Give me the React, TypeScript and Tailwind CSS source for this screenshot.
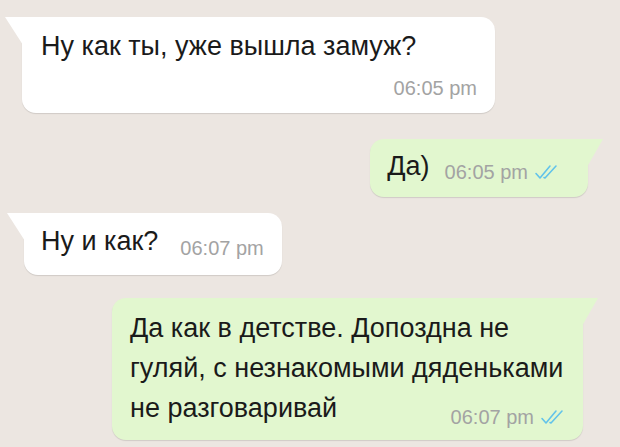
import React from 'react';

const Ticks = () => (
  <svg width="26" height="16" viewBox="0 0 26 16" fill="none" className="inline-block">
    <path d="M2 9.5 L6 14 L16 2" stroke="#62c3ea" strokeWidth="1.6" strokeLinecap="round" strokeLinejoin="round" />
    <path d="M10 13.5 L11 14 L22 2" stroke="#62c3ea" strokeWidth="1.6" strokeLinecap="round" strokeLinejoin="round" />
  </svg>
);

const InTail = () => (
  <svg width="18" height="28" viewBox="0 0 18 28" className="absolute -left-[17px] top-0">
    <path d="M0 0 L18 0 L18 28 Z" fill="#ffffff" />
  </svg>
);

const OutTail = () => (
  <svg width="16" height="28" viewBox="0 0 16 28" className="absolute -right-[15px] top-0">
    <path d="M16 0 L0 0 L0 28 Z" fill="#e2f7cf" />
  </svg>
);

const Time = ({ children }: { children: React.ReactNode }) => (
  <span className="text-[20px] leading-none text-[#a3a3a3]">{children}</span>
);

export default function App() {
  return (
    <div
      className="w-[620px] h-[447px] overflow-hidden bg-[#ece6e1] flex flex-col text-[#1a1a1a]"
      style={{ fontFamily: '"Liberation Sans", Arial, sans-serif' }}
    >
      {/* incoming 1 */}
      <div className="relative ml-[22px] mt-[17px] w-[473px] h-[96px] bg-white rounded-[14px] rounded-tl-none shadow-[0_1px_1px_rgba(0,0,0,0.12)] pl-[19px] pr-[18px] pt-[13px]">
        <InTail />
        <div className="text-[27px] leading-[32px]">Ну как ты, уже вышла замуж?</div>
        <div className="flex justify-end mt-[16px]">
          <Time>06:05 pm</Time>
        </div>
      </div>

      {/* outgoing 1 */}
      <div className="relative self-end mr-[32px] mt-[26px] h-[58px] bg-[#e2f7cf] rounded-[14px] rounded-tr-none shadow-[0_1px_1px_rgba(0,0,0,0.12)] pl-[17px] pr-[28px] flex items-center">
        <OutTail />
        <span className="text-[27px] leading-none -mt-[4px]">Да)</span>
        <span className="ml-[15px] mt-[8px] flex items-center gap-[6px]">
          <Time>06:05 pm</Time>
          <Ticks />
        </span>
      </div>

      {/* incoming 2 */}
      <div className="relative self-start ml-[24px] mt-[16px] h-[62px] bg-white rounded-[14px] rounded-tl-none shadow-[0_1px_1px_rgba(0,0,0,0.12)] pl-[17px] pr-[18px] flex items-center">
        <InTail />
        <span className="text-[27px] leading-none -mt-[6px]">Ну и как?</span>
        <span className="ml-[22px] mt-[12px]">
          <Time>06:07 pm</Time>
        </span>
      </div>

      {/* outgoing 2 */}
      <div className="relative self-end mr-[37px] mt-[23px] w-[471px] h-[142px] bg-[#e2f7cf] rounded-[14px] rounded-tr-none shadow-[0_1px_1px_rgba(0,0,0,0.12)] pl-[18px] pr-[17px] pt-[10px]">
        <OutTail />
        <div className="text-[27px] leading-[40px]">
          Да как в детстве. Допоздна не гуляй, с незнакомыми дяденьками не разговаривай
          <span className="float-right relative top-[19px] flex items-center gap-[6px]">
            <Time>06:07 pm</Time>
            <Ticks />
          </span>
        </div>
      </div>
    </div>
  );
}
